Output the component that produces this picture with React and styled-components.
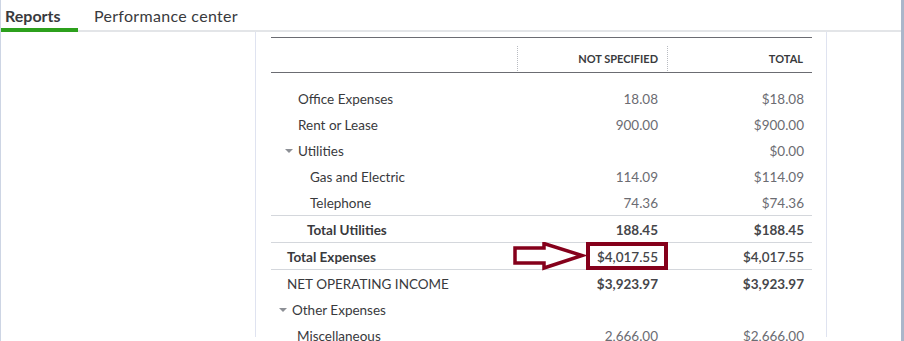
import React from 'react';
import styled, { createGlobalStyle } from 'styled-components';

const GlobalStyle = createGlobalStyle`
body {
  margin: 0;
  background: #ffffff;
  font-family: Lato, "Open Sans", Arial, sans-serif;
}
`

const Page = styled.div`
display: flex;
flex-direction: column;
width: 904px;
height: 341px;
box-sizing: border-box;
border-left: 1px solid #cdd5e4;
border-right: 3px solid #aab6ca;
overflow: hidden;
background: #fff;
`

const TabBar = styled.div`
display: flex;
align-items: stretch;
height: 32px;
box-sizing: border-box;
border-bottom: 2px solid #e3e5e8;
flex-shrink: 0;
`

const Tab = styled.div`
display: flex;
align-items: center;
box-sizing: border-box;
width: ${p => p.$width};
padding: 2px 0 0 ${p => p.$pad};
margin-bottom: -2px;
font-size: 16px;
font-weight: ${p => p.$active ? 700 : 400};
color: #393a3d;
letter-spacing: ${p => p.$active ? '0' : '0.3px'};
border-bottom: 4px solid ${p => p.$active ? '#2ca01c' : 'transparent'};
`

const Body = styled.div`
display: flex;
flex: 1;
min-height: 0;
`

const Sidebar = styled.div`
width: 254px;
flex-shrink: 0;
border-right: 1px solid #dfe3f0;
margin-bottom: 4px;
`

const ReportPanel = styled.div`
width: 571px;
flex-shrink: 0;
box-sizing: border-box;
padding: 5px 15px 0 15px;
border-right: 1px solid #dfe3f0;
margin-bottom: 4px;
`

const Table = styled.table`
width: 541px;
border-collapse: collapse;
table-layout: fixed;
color: #393a3d;
`

const HeadCell = styled.th`
position: relative;
height: 35px;
padding: 6px 9px 0 0;
box-sizing: border-box;
text-align: right;
font-size: 11px;
font-weight: 700;
color: #393a3d;
border-top: 1px solid #6b6c72;
border-bottom: 1px solid #6b6c72;
&::before{
  content: ${p => p.$sep ? '""' : 'none'};
  position: absolute;
  left: 0;
  top: 8px;
  bottom: 1px;
  border-left: 1px dotted #b9bcc2;
}
`

const Spacer = styled.tr`
height: 13px;
`

const Row = styled.tr`
height: ${p => p.$line ? '27px' : '26px'};
border-top: ${p => p.$line ? '1px solid #d4d7dc' : 'none'};
`

const Label = styled.td`
padding: 1px 0 0 ${p => p.$indent}px;
font-size: 13.5px;
font-weight: ${p => p.$bold ? 700 : 400};
color: #393a3d;
white-space: nowrap;
`

const Caret = styled.span`
display: inline-block;
width: 0;
height: 0;
border-left: 4px solid transparent;
border-right: 4px solid transparent;
border-top: 4px solid #8d9096;
margin-right: 5px;
vertical-align: 3px;
`

const Amount = styled.td`
position: relative;
padding: 1px ${p => p.$last ? '8px' : '9px'} 0 0;
text-align: right;
font-size: 13.5px;
font-weight: ${p => p.$weight || 400};
color: ${p => p.$weight ? '#45464a' : '#6b6c72'};
white-space: nowrap;
`

const HighlightBox = styled.div`
position: absolute;
left: 69px;
right: -1px;
top: -1px;
bottom: -1px;
border: 4px solid #85001b;
pointer-events: none;
`

const Arrow = styled.svg`
position: absolute;
left: -4px;
top: -1px;
`

const rows = [
  { label: 'Office Expenses', indent: 27, a: '18.08', b: '$18.08' },
  { label: 'Rent or Lease', indent: 27, a: '900.00', b: '$900.00' },
  { label: 'Utilities', indent: 14, caret: true, a: '', b: '$0.00' },
  { label: 'Gas and Electric', indent: 39, a: '114.09', b: '$114.09' },
  { label: 'Telephone', indent: 39, a: '74.36', b: '$74.36' },
  { label: 'Total Utilities', indent: 36, bold: true, line: true, a: '188.45', b: '$188.45', weight: 700 },
  { label: 'Total Expenses', indent: 16, bold: true, line: true, a: '$4,017.55', b: '$4,017.55', weight: 600, highlight: true },
  { label: 'NET OPERATING INCOME', indent: 16, line: true, a: '$3,923.97', b: '$3,923.97', weight: 700 },
  { label: 'Other Expenses', indent: 8, caret: true, a: '', b: '' },
  { label: 'Miscellaneous', indent: 26, a: '2,666.00', b: '$2,666.00' },
];

function App() {
  return (
    <>
      <GlobalStyle />
      <Page>
        <TabBar>
          <Tab $active $width="77px" $pad="4px">Reports</Tab>
          <Tab $pad="16px">Performance center</Tab>
        </TabBar>
        <Body>
          <Sidebar />
          <ReportPanel>
            <Table>
              <colgroup>
                <col style={{ width: 246 }} />
                <col style={{ width: 150 }} />
                <col style={{ width: 145 }} />
              </colgroup>
              <thead>
                <tr>
                  <HeadCell></HeadCell>
                  <HeadCell $sep>NOT SPECIFIED</HeadCell>
                  <HeadCell $sep>TOTAL</HeadCell>
                </tr>
              </thead>
              <tbody>
                <Spacer><td colSpan={3}></td></Spacer>
                {rows.map(r => (
                  <Row key={r.label} $line={r.line}>
                    <Label $indent={r.indent} $bold={r.bold}>
                      {r.caret && <Caret />}
                      {r.label}
                    </Label>
                    <Amount $weight={r.weight}>
                      {r.a}
                      {r.highlight && (
                        <>
                          <Arrow width="74" height="30" viewBox="0 0 74 30">
                            <polygon
                              points="2,6 31,6 31,1.5 69,13.5 31,26 31,21 2,21"
                              fill="#fff"
                              stroke="#85001b"
                              strokeWidth="3.5"
                              strokeLinejoin="miter"
                            />
                          </Arrow>
                          <HighlightBox />
                        </>
                      )}
                    </Amount>
                    <Amount $last $weight={r.weight}>{r.b}</Amount>
                  </Row>
                ))}
              </tbody>
            </Table>
          </ReportPanel>
        </Body>
      </Page>
    </>
  );
}

export default App;
